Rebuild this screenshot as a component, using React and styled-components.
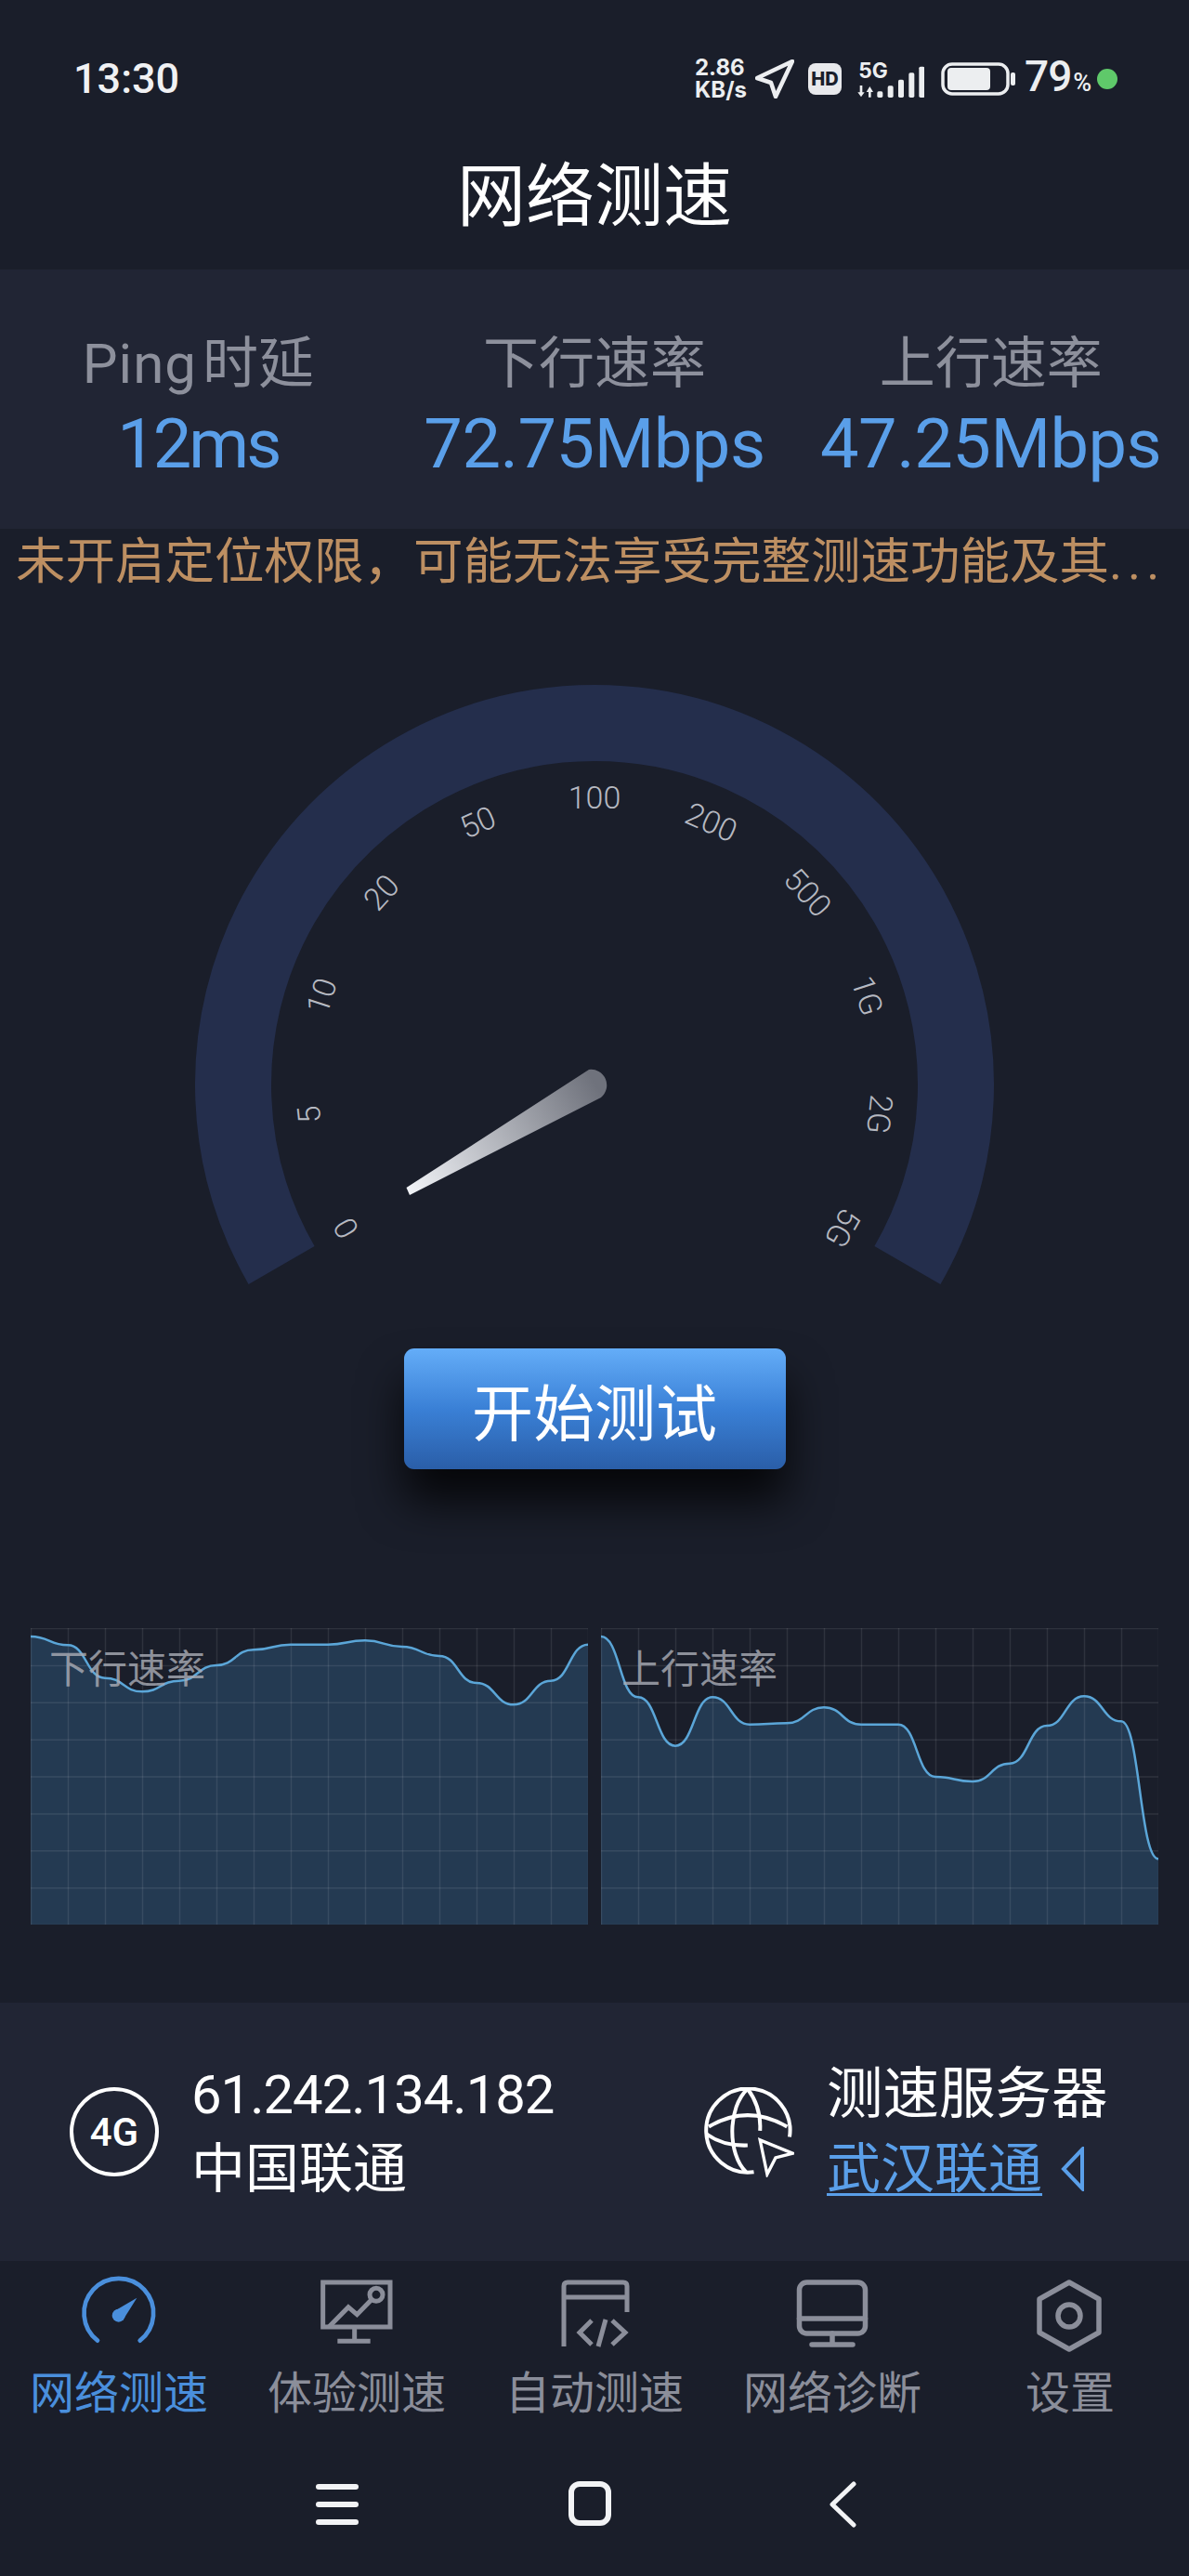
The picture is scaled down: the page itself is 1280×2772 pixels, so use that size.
import styled, { createGlobalStyle } from 'styled-components';

const GlobalStyle = createGlobalStyle`
  html, body {
    margin: 0;
    padding: 0;
    background: #1a1e2a;
  }
  * {
    box-sizing: border-box;
  }
`;

const fonts = `Roboto, "Noto Sans CJK SC", sans-serif`;

const Page = styled.div`
  width: 1280px;
  height: 2772px;
  overflow: hidden;
  background: #1a1e2a;
  color: #ffffff;
  font-family: ${fonts};
`;

const StatusBar = styled.div`
  display: flex;
  align-items: center;
  justify-content: space-between;
  height: 130px;
  padding: 40px 77px 0 79px;
`;

const Clock = styled.div`
  font-size: 45px;
  font-weight: 500;
  color: #f0f1f3;
  line-height: 90px;
  height: 90px;
`;

const StatusIcons = styled.div`
  display: flex;
  align-items: center;
  height: 90px;
  color: #eceef0;
`;

const NetSpeed = styled.div`
  width: 57px;
  margin-right: 8px;
  font-family: Inter, sans-serif;
  font-size: 24px;
  font-weight: 700;
  line-height: 24px;
  white-space: nowrap;
`;

const HdBadge = styled.div`
  display: flex;
  align-items: center;
  justify-content: center;
  width: 36px;
  height: 34px;
  margin: 0 15px 0 15px;
  border-radius: 8px;
  background: #e8e9ec;
  color: #1a1e2a;
  font-family: Inter, sans-serif;
  font-size: 20px;
  font-weight: 800;
`;

const Battery = styled.svg`
  margin: 0 10px 0 18px;
`;

const BatteryLevel = styled.div`
  width: 71px;
  font-size: 46px;
  font-weight: 500;
  line-height: 46px;
  letter-spacing: -1px;
  white-space: nowrap;

  span {
    font-size: 27px;
    letter-spacing: 0;
    margin-left: 2px;
  }
`;

const GreenDot = styled.div`
  width: 22px;
  height: 22px;
  margin-left: 7px;
  border-radius: 50%;
  background: #5fc96a;
`;

const Title = styled.h1`
  display: flex;
  align-items: center;
  justify-content: center;
  height: 160px;
  margin: 0;
  padding-bottom: 12px;
  font-size: 74px;
  font-weight: 400;
`;

const StatsPanel = styled.div`
  display: grid;
  grid-template-columns: repeat(3, 1fr);
  height: 279px;
  padding-top: 67px;
  background: #212534;
`;

const Stat = styled.div`
  display: flex;
  flex-direction: column;
  align-items: center;
  white-space: nowrap;
`;

const StatLabel = styled.div`
  font-size: 60px;
  line-height: 70px;
  color: #8d909c;

  span {
    letter-spacing: 1px;
    margin-right: 6px;
  }
`;

const StatValue = styled.div`
  margin-top: 8px;
  font-size: 74px;
  line-height: 86px;
  letter-spacing: ${(props) => (props.$tight ? '-3px' : '-0.5px')};
  color: #5a9fe9;
`;

const Warning = styled.div`
  height: 71px;
  padding-left: 17px;
  font-size: 53.5px;
  line-height: 71px;
  color: #bd8f62;
  white-space: nowrap;

  span {
    letter-spacing: 6px;
  }
`;

const GaugeWrap = styled.div`
  display: flex;
  justify-content: center;
  padding-top: 97px;
`;

const GaugeLabel = styled.text`
  font-family: Roboto, sans-serif;
  font-size: 34px;
  font-weight: 300;
  fill: #b6b9c1;
`;

const StartRow = styled.div`
  display: flex;
  justify-content: center;
  margin-top: 64px;
`;

const StartButton = styled.button`
  width: 411px;
  height: 130px;
  border: 0;
  border-radius: 11px;
  background: linear-gradient(180deg, #64adf8 0%, #3a80d6 50%, #2a5ea8 100%);
  box-shadow: 0 34px 48px rgba(0, 0, 0, 0.78);
  color: #ffffff;
  font-family: ${fonts};
  font-size: 66px;
`;

const Charts = styled.div`
  display: flex;
  gap: 14px;
  margin-top: 171px;
  padding: 0 33px;
`;

const ChartBox = styled.div`
  position: relative;
  width: 600px;
  height: 319px;
`;

const ChartSvg = styled.svg`
  display: block;
`;

const ChartLabel = styled.div`
  position: absolute;
  top: 24px;
  left: ${(props) => props.$left}px;
  font-size: 42px;
  line-height: 42px;
  color: rgba(168, 171, 180, 0.82);
`;

const InfoPanel = styled.div`
  display: grid;
  grid-template-columns: 683px 1fr;
  align-items: center;
  height: 278px;
  margin-top: 84px;
  padding-left: 75px;
  background: #212534;
`;

const InfoBlock = styled.div`
  display: flex;
  align-items: center;
  gap: 35px;
`;

const NetBadge = styled.div`
  display: flex;
  align-items: center;
  justify-content: center;
  width: 96px;
  height: 96px;
  border: 4px solid #ffffff;
  border-radius: 50%;
  font-size: 42px;
  font-weight: 500;
`;

const InfoText = styled.div`
  display: flex;
  flex-direction: column;
  font-size: 58px;
  line-height: 80px;
  white-space: nowrap;
`;

const IpText = styled.span`
  letter-spacing: -1px;
`;

const ServerTitle = styled.span`
  font-size: 60.5px;
`;

const ServerLink = styled.div`
  display: flex;
  align-items: center;
  gap: 20px;
  color: #5a9fe9;
`;

const LinkText = styled.span`
  text-decoration: underline;
  text-decoration-thickness: 3px;
  text-underline-offset: 6px;
`;

const Tabs = styled.div`
  display: grid;
  grid-template-columns: repeat(5, 1fr);
  height: 187px;
  padding-top: 17px;
`;

const Tab = styled.div`
  display: flex;
  flex-direction: column;
  align-items: center;
  color: ${(props) => (props.$active ? '#4a8fdc' : '#8b8e9a')};
`;

const TabIcon = styled.svg`
  display: block;
  overflow: visible;
`;

const TabLabel = styled.div`
  margin-top: 18px;
  font-size: 48px;
  line-height: 56px;
`;

const SystemNav = styled.div`
  display: grid;
  grid-template-columns: repeat(3, 1fr);
  justify-items: center;
  width: 816px;
  margin-left: 227px;
  padding-top: 50px;
`;

// y values read off the reference, 16 samples, one per grid column
const downData = [122, 150, 256, 300, 265, 215, 165, 148, 148, 135, 155, 185, 272, 342, 265, 148];
const upData = [122, 318, 475, 318, 406, 402, 351, 406, 406, 575, 590, 532, 410, 315, 396, 840];

function buildLine(data) {
  const step = 40;
  const pts = data.map((v, i) => [i * step, (v - 95) / 3]);
  let d = `M${pts[0][0]} ${pts[0][1]}`;
  for (let i = 1; i < pts.length; i++) {
    const [px, py] = pts[i - 1];
    const [x, y] = pts[i];
    d += ` C${px + step * 0.5} ${py} ${x - step * 0.5} ${y} ${x} ${y}`;
  }
  return d;
}

function Chart({ data, label, labelLeft }) {
  const line = buildLine(data);
  const cols = Array.from({ length: 16 }, (_, i) => i * 40);
  const rows = Array.from({ length: 9 }, (_, i) => i * 39.875);
  return (
    <ChartBox>
      <ChartSvg width='600' height='319' viewBox='0 0 600 319'>
        <path d={`${line} L600 319 L0 319 Z`} fill='#243a52' />
        {cols.map((x) => (
          <line key={x} x1={x + 0.5} x2={x + 0.5} y1='0' y2='319' stroke='rgba(255,255,255,0.09)' strokeWidth='1.5' />
        ))}
        {rows.map((y) => (
          <line key={y} x1='0' x2='600' y1={y + 0.5} y2={y + 0.5} stroke='rgba(255,255,255,0.09)' strokeWidth='1.5' />
        ))}
        <path d={line} fill='none' stroke='#5ba6d8' strokeWidth='2.5' />
      </ChartSvg>
      <ChartLabel $left={labelLeft}>{label}</ChartLabel>
    </ChartBox>
  );
}

const gaugeTicks = ['0', '5', '10', '20', '50', '100', '200', '500', '1G', '2G', '5G'];

function Gauge() {
  return (
    <svg width='860' height='650' viewBox='210 737 860 650'>
      <defs>
        <linearGradient id='needle' gradientUnits='userSpaceOnUse' x1='438' y1='1282' x2='640' y2='1165'>
          <stop offset='0' stopColor='#f2f4f8' />
          <stop offset='1' stopColor='#6f727c' />
        </linearGradient>
      </defs>
      <path d='M303.1 1361.5 A389 389 0 1 1 976.9 1361.5' fill='none' stroke='#242e4c' strokeWidth='82' />
      {gaugeTicks.map((t, i) => {
        const a = -120 + i * 24;
        const rad = (a * Math.PI) / 180;
        const x = 640 + 309 * Math.sin(rad);
        const y = 1167 - 309 * Math.cos(rad);
        return (
          <GaugeLabel key={t} x={x} y={y} textAnchor='middle' dominantBaseline='central' transform={`rotate(${a} ${x} ${y})`}>
            {t}
          </GaugeLabel>
        );
      })}
      <path d='M437.5 1278 L634 1151 A17 17 0 0 1 647 1181 L441 1286 Z' fill='url(#needle)' />
    </svg>
  );
}

function Signal() {
  return (
    <svg width='74' height='45' viewBox='605 62 222 135'>
      <text x='615' y='126' fontFamily='Inter, sans-serif' fontWeight='700' fontSize='68' fill='#eceef0'>
        5G
      </text>
      <path d='M612 165 H634 L623 150 Z M619 165 H627 V187 H619 Z' fill='#eceef0' transform='rotate(180 623 168)' />
      <path d='M640 170 H662 L651 152 Z M647 170 H655 V187 H647 Z' fill='#eceef0' />
      <rect x='675' y='168' width='18' height='20' rx='5' fill='#eceef0' />
      <rect x='709' y='150' width='18' height='38' rx='5' fill='#eceef0' />
      <rect x='743' y='130' width='18' height='58' rx='5' fill='#eceef0' />
      <rect x='777' y='108' width='18' height='80' rx='5' fill='#eceef0' />
      <rect x='810' y='88' width='18' height='100' rx='5' fill='#eceef0' />
    </svg>
  );
}

function GaugeTabIcon() {
  return (
    <TabIcon width='90' height='80' viewBox='69 30 270 240'>
      <path d='M135 236 A112 112 0 1 1 272 236' fill='none' stroke='currentColor' strokeWidth='14' strokeLinecap='round' />
      <circle cx='203' cy='155' r='21' fill='currentColor' />
      <path d='M262 98 L216 172 L190 140 Z' fill='currentColor' />
    </TabIcon>
  );
}

function TrendTabIcon() {
  return (
    <TabIcon width='90' height='80' viewBox='837 30 270 240' fill='none' stroke='currentColor' strokeWidth='15'>
      <path d='M863 48 H1080 V192 H863 Z' />
      <path d='M965 192 V236 M910 238 H1016' />
      <path d='M882 192 L945 128 L973 152 L1018 106' />
      <circle cx='1035' cy='88' r='21' />
    </TabIcon>
  );
}

function CodeTabIcon() {
  return (
    <TabIcon width='90' height='80' viewBox='-45 0 90 80' fill='none' stroke='currentColor' strokeWidth='5'>
      <path d='M-33 75 V10 Q-33 6 -29 6 H31 Q35 6 35 10 V38' />
      <path d='M-33 22 H35' />
      <path d='M-3 47 L-16 60 L-3 73 M19 47 L33 60 L19 73' />
      <path d='M12 46 L4 75' />
    </TabIcon>
  );
}

function ScreenTabIcon() {
  return (
    <TabIcon width='90' height='80' viewBox='-45 0 90 80' fill='none' stroke='currentColor' strokeWidth='5.5' strokeLinecap='round'>
      <rect x='-35.5' y='6' width='71' height='55' rx='8' />
      <path d='M-35.5 45 H35.5' />
      <path d='M0 61 V72 M-22 73 H22' />
    </TabIcon>
  );
}

function SettingTabIcon() {
  return (
    <TabIcon width='90' height='80' viewBox='-44 0 90 80' fill='none' stroke='currentColor' strokeWidth='5.5'>
      <path d='M0 6 L32 24 V60 L0 78 L-32 60 V24 Z' strokeLinejoin='round' />
      <circle cx='0' cy='42' r='12' />
    </TabIcon>
  );
}

function App() {
  return (
    <Page>
      <GlobalStyle />
      <StatusBar>
        <Clock>13:30</Clock>
        <StatusIcons>
          <NetSpeed>
            2.86
            <br />
            KB/s
          </NetSpeed>
          <svg width='42' height='42' viewBox='0 0 42 42' fill='none' stroke='#eceef0' strokeWidth='4.5' strokeLinejoin='round'>
            <path d='M2 20 L40 2 L22 40 L17 25 Z' />
          </svg>
          <HdBadge>HD</HdBadge>
          <Signal />
          <Battery width='80' height='36' viewBox='0 0 80 36'>
            <rect x='2' y='2' width='70' height='32' rx='10' fill='none' stroke='#eceef0' strokeWidth='3.5' />
            <rect x='7' y='6' width='46' height='24' rx='4' fill='#eceef0' />
            <rect x='75' y='11' width='5' height='14' rx='2' fill='#eceef0' />
          </Battery>
          <BatteryLevel>
            79<span>%</span>
          </BatteryLevel>
          <GreenDot />
        </StatusIcons>
      </StatusBar>

      <Title>网络测速</Title>

      <StatsPanel>
        <Stat>
          <StatLabel>
            <span>Ping</span>时延
          </StatLabel>
          <StatValue $tight>12ms</StatValue>
        </Stat>
        <Stat>
          <StatLabel>下行速率</StatLabel>
          <StatValue>72.75Mbps</StatValue>
        </Stat>
        <Stat>
          <StatLabel>上行速率</StatLabel>
          <StatValue>47.25Mbps</StatValue>
        </Stat>
      </StatsPanel>

      <Warning>
        未开启定位权限，可能无法享受完整测速功能及其<span>...</span>
      </Warning>

      <GaugeWrap>
        <Gauge />
      </GaugeWrap>

      <StartRow>
        <StartButton>开始测试</StartButton>
      </StartRow>

      <Charts>
        <Chart data={downData} label='下行速率' labelLeft={20} />
        <Chart data={upData} label='上行速率' labelLeft={22} />
      </Charts>

      <InfoPanel>
        <InfoBlock>
          <NetBadge>4G</NetBadge>
          <InfoText>
            <IpText>61.242.134.182</IpText>
            <span>中国联通</span>
          </InfoText>
        </InfoBlock>
        <InfoBlock>
          <svg width='97' height='97' viewBox='55 45 290 290' fill='none' stroke='#ffffff' strokeWidth='12'>
            <path d='M330 205 A135 135 0 1 0 215 318' />
            <path d='M195 50 C130 110 130 260 190 318' />
            <path d='M195 50 C225 90 238 135 235 185' />
            <path d='M70 172 Q195 98 322 172' />
            <path d='M62 195 Q115 235 195 232' />
            <path d='M235 215 L340 258 L285 272 L258 325 Z' strokeWidth='10' />
          </svg>
          <InfoText>
            <ServerTitle>测速服务器</ServerTitle>
            <ServerLink>
              <LinkText>武汉联通</LinkText>
              <svg width='26' height='48' viewBox='0 0 26 48' fill='none' stroke='#5a9fe9' strokeWidth='4'>
                <path d='M23 3 L3 24 L23 45 Z' />
              </svg>
            </ServerLink>
          </InfoText>
        </InfoBlock>
      </InfoPanel>

      <Tabs>
        <Tab $active>
          <GaugeTabIcon />
          <TabLabel>网络测速</TabLabel>
        </Tab>
        <Tab>
          <TrendTabIcon />
          <TabLabel>体验测速</TabLabel>
        </Tab>
        <Tab>
          <CodeTabIcon />
          <TabLabel>自动测速</TabLabel>
        </Tab>
        <Tab>
          <ScreenTabIcon />
          <TabLabel>网络诊断</TabLabel>
        </Tab>
        <Tab>
          <SettingTabIcon />
          <TabLabel>设置</TabLabel>
        </Tab>
      </Tabs>

      <SystemNav>
        <svg width='46' height='48' viewBox='0 0 46 48' fill='#f2f3f5'>
          <rect x='0' y='3' width='46' height='6' rx='3' />
          <rect x='0' y='22' width='46' height='6' rx='3' />
          <rect x='0' y='41' width='46' height='6' rx='3' />
        </svg>
        <svg width='46' height='48' viewBox='0 0 46 48' fill='none' stroke='#f2f3f5' strokeWidth='6'>
          <rect x='3' y='3' width='40' height='42' rx='9' />
        </svg>
        <svg width='30' height='50' viewBox='0 0 30 50' fill='none' stroke='#f2f3f5' strokeWidth='5' strokeLinecap='round' strokeLinejoin='round'>
          <path d='M27 3 L4 25 L27 47' />
        </svg>
      </SystemNav>
    </Page>
  );
}

export default App;
